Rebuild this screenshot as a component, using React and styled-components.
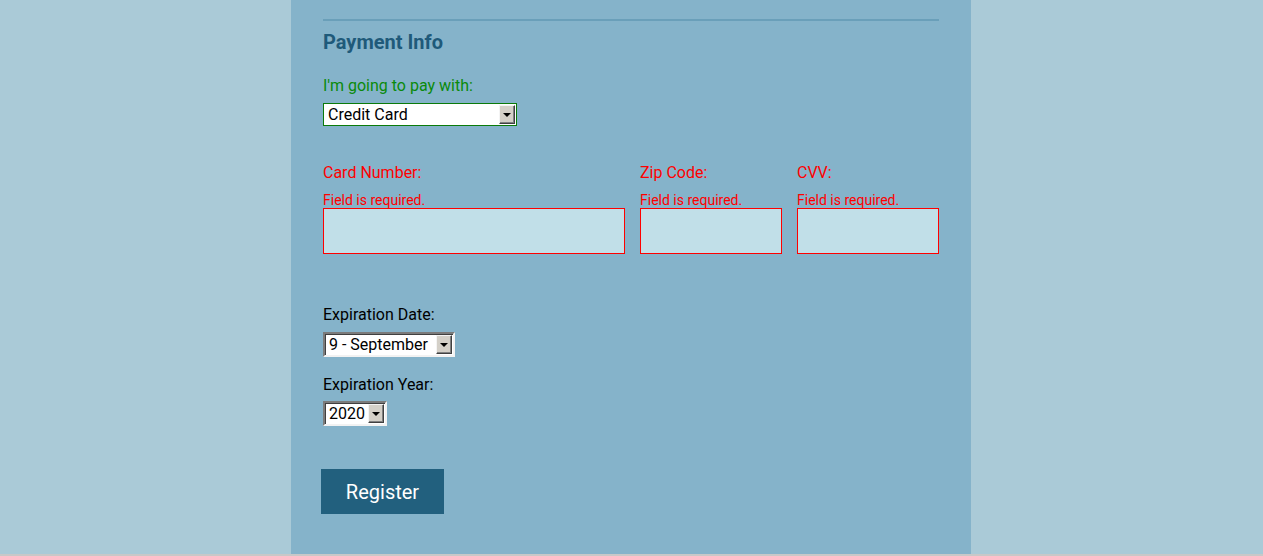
import styled, { createGlobalStyle } from "styled-components";

const GlobalStyle = createGlobalStyle`
  html, body {
    margin: 0;
    padding: 0;
    background-color: #aacad7;
    font-family: Roboto, "Liberation Sans", sans-serif;
  }
`;

export default function App() {
  return (
    <>
      <GlobalStyle />
      <Page>
        <Panel>
          <Rule />
          <Heading>Payment Info</Heading>

          <Label color="#0a8a0a" top={22}>I'm going to pay with:</Label>
          <SelectWrap width={194} gap={8} variant="flat">
            <Select defaultValue="credit">
              <option value="credit">Credit Card</option>
              <option value="paypal">PayPal</option>
              <option value="bitcoin">Bitcoin</option>
            </Select>
            <Arrow />
          </SelectWrap>

          <CardRow>
            <Field>
              <Label color="#ff0000" top={0}>Card Number:</Label>
              <Error>Field is required.</Error>
              <Input />
            </Field>
            <Field>
              <Label color="#ff0000" top={0}>Zip Code:</Label>
              <Error>Field is required.</Error>
              <Input />
            </Field>
            <Field>
              <Label color="#ff0000" top={0}>CVV:</Label>
              <Error>Field is required.</Error>
              <Input />
            </Field>
          </CardRow>

          <Label top={51}>Expiration Date:</Label>
          <SelectWrap width={132} gap={8}>
            <Select defaultValue="9">
              <option value="9">9 - September</option>
            </Select>
            <Arrow />
          </SelectWrap>

          <Label top={18}>Expiration Year:</Label>
          <SelectWrap width={64} gap={7}>
            <Select defaultValue="2020">
              <option value="2020">2020</option>
            </Select>
            <Arrow />
          </SelectWrap>

          <Button>Register</Button>
        </Panel>
      </Page>
      <Footer />
    </>
  );
}

const Page = styled.div`
  display: flex;
  justify-content: center;
  padding-right: 1px;
`;

const Panel = styled.div`
  width: 680px;
  box-sizing: border-box;
  padding: 19px 32px 40px;
  background-color: #85b3ca;
  display: flex;
  flex-direction: column;
  align-items: flex-start;
`;

const Rule = styled.div`
  width: 100%;
  height: 2px;
  background-color: #6a9fb9;
`;

const Heading = styled.h2`
  margin: 9px 0 0;
  font-size: 20px;
  line-height: 24px;
  font-weight: 700;
  color: #1f5a7a;
`;

const Label = styled.label`
  display: block;
  margin-top: ${(p) => p.top}px;
  font-size: 16px;
  line-height: 19px;
  color: ${(p) => p.color || "#000"};
`;

const SelectWrap = styled.div`
  position: relative;
  margin-top: ${(p) => p.gap}px;
  width: ${(p) => p.width}px;
  height: ${(p) => (p.variant === "flat" ? 23 : 25)}px;
  box-sizing: border-box;
  background: #fff;
  ${(p) =>
    p.variant === "flat"
      ? "border: 1px solid #0a7a0a;"
      : `border-style: solid;
         border-width: 2px;
         border-color: #7b7b7b #f2f2f2 #f2f2f2 #7b7b7b;
         box-shadow: inset 1px 1px 0 #404040;`}
`;

const Select = styled.select`
  appearance: none;
  -webkit-appearance: none;
  width: 100%;
  height: 100%;
  border: none;
  outline: none;
  background: transparent;
  padding: 0 0 0 4px;
  font-family: Roboto, "Liberation Sans", sans-serif;
  font-size: 16px;
  color: #000;
`;

const Arrow = styled.span`
  position: absolute;
  top: 1px;
  right: 1px;
  bottom: 1px;
  width: 16px;
  box-sizing: border-box;
  background: #d4d0c8;
  border-style: solid;
  border-width: 1px;
  border-color: #f4f4f4 #404040 #404040 #f4f4f4;
  box-shadow: inset -1px -1px 0 #808080;
  pointer-events: none;

  &::after {
    content: "";
    position: absolute;
    left: 3px;
    top: 7px;
    border-left: 4px solid transparent;
    border-right: 4px solid transparent;
    border-top: 4px solid #000;
  }
`;

const CardRow = styled.div`
  width: 100%;
  margin-top: 37px;
  display: grid;
  grid-template-columns: 302px 142px 142px;
  column-gap: 15px;
`;

const Field = styled.div`
  display: flex;
  flex-direction: column;
`;

const Error = styled.span`
  margin-top: 10px;
  font-size: 14px;
  line-height: 16px;
  color: #ff0000;
`;

const Input = styled.input`
  height: 46px;
  box-sizing: border-box;
  border: 1px solid #ff0000;
  background-color: #c1dfe8;
  outline: none;
`;

const Button = styled.button`
  margin: 43px 0 0 -2px;
  width: 123px;
  height: 45px;
  border: none;
  background-color: #22607e;
  color: #fff;
  font-family: Roboto, "Liberation Sans", sans-serif;
  font-size: 20px;
`;

const Footer = styled.div`
  height: 2px;
  background-color: #c8c8c8;
`;
